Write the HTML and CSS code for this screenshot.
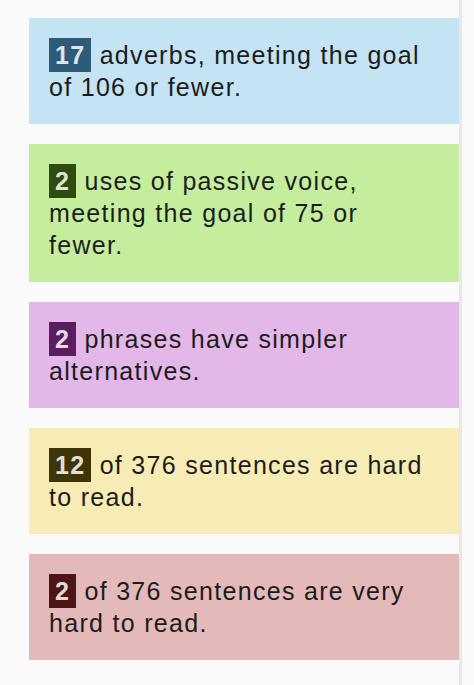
FILE: index.html
```html
<!DOCTYPE html>
<html lang="en">
<head>
<meta charset="utf-8">
<title>Readability stats</title>
<link rel="stylesheet" href="styles.css">
</head>
<body>
<div class="panel">
  <div class="card adverb"><span class="badge">17</span> adverbs, meeting the goal of 106 or fewer.</div>
  <div class="card passive"><span class="badge">2</span> uses of passive voice, meeting the goal of 75 or fewer.</div>
  <div class="card complex"><span class="badge">2</span> phrases have simpler alternatives.</div>
  <div class="card hard"><span class="badge">12</span> of 376 sentences are hard to read.</div>
  <div class="card veryhard"><span class="badge">2</span> of 376 sentences are very hard to read.</div>
</div>
</body>
</html>
```
FILE: styles.css
```css
html, body {
  margin: 0;
  padding: 0;
  background: #fafafa;
}
body {
  font-family: "Liberation Sans", Arial, Helvetica, sans-serif;
  color: #1c1c1c;
  min-height: 685px;
}
.panel {
  box-sizing: border-box;
  width: 433px;
  min-height: 685px;
  margin-left: 29px;
  padding: 18px 0 0 0;
  border-right: 3px solid #e8e8e8;
  display: flex;
  flex-direction: column;
  gap: 20px;
}
.card {
  padding: 21px 20px;
  font-size: 25px;
  line-height: 32px;
  letter-spacing: 1.3px;
}
.badge {
  padding: 3px 6px;
  font-weight: bold;
  color: rgba(255, 255, 255, 0.86);
}
.adverb { background: #c4e3f3; }
.adverb .badge { background: #2d5c7a; }
.passive { background: #c4ed9d; }
.passive .badge { background: #2f4c0f; }
.complex { background: #e3b7e8; }
.complex .badge { background: #5a1d5f; }
.hard { background: #f7ecb5; }
.hard .badge { background: #3f3308; }
.veryhard { background: #e4b9b9; }
.veryhard .badge { background: #4d1516; }
```
